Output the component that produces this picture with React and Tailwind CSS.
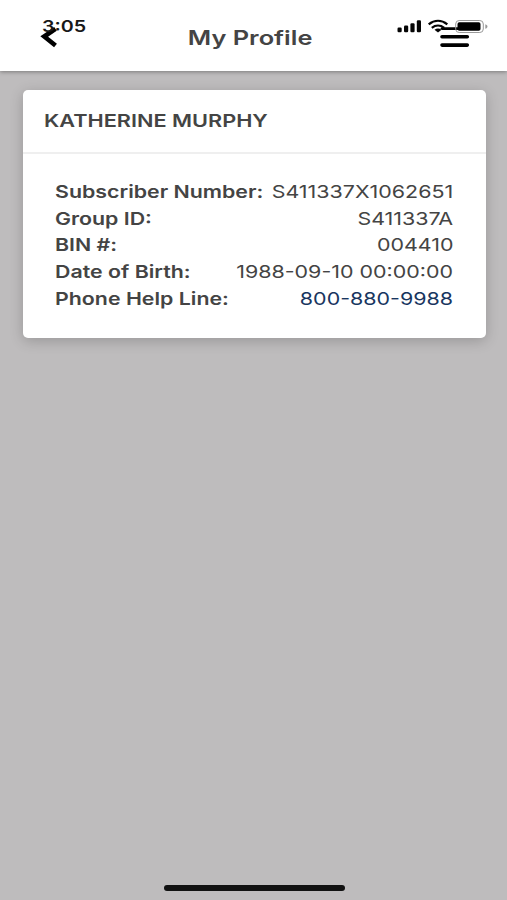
const details = [
  { label: 'Subscriber Number:', value: 'S411337X1062651' },
  { label: 'Group ID:', value: 'S411337A' },
  { label: 'BIN #:', value: '004410' },
  { label: 'Date of Birth:', value: '1988-09-10 00:00:00' },
  { label: 'Phone Help Line:', value: '800-880-9988', link: true },
]

function StatusIcons() {
  return (
    <svg width="92" height="16" viewBox="396 18 92 16" fill="none">
      <g fill="#050505">
        <rect x="397.5" y="27.5" width="4.2" height="4.8" rx="1.2" />
        <rect x="404" y="25.6" width="4.2" height="6.7" rx="1.2" />
        <rect x="410.4" y="23.2" width="4.2" height="9.1" rx="1.2" />
        <rect x="416.8" y="20.3" width="4.2" height="12" rx="1.2" />
      </g>
      <path d="M428.700 24.300C434.500 19.800 441.500 19.800 447.300 24.300" stroke="#050505" strokeWidth="2.300" />
      <path d="M431.800 27.800C435.500 24.900 440.500 24.900 444.200 27.800" stroke="#050505" strokeWidth="2.200" />
      <path d="M434.500 29.700Q438 27.300 441.500 29.700L438 32.500Z" fill="#050505" />
      <rect x="455.700" y="20.500" width="27.600" height="12" rx="3.500" stroke="#999" />
      <rect x="457.500" y="22.200" width="23" height="8.600" rx="1.800" fill="#000" />
      <path d="M485.300 24.200C488.200 25 488.200 28 485.300 28.800Z" fill="#999" />
    </svg>
  )
}

// Floats over the header, as the phone's own status bar does
function StatusBar() {
  return (
    <div className="pointer-events-none absolute inset-x-0 top-0 flex items-start justify-between pl-[42px] pr-[19px] pt-4">
      <span className="origin-left scale-x-[1.23] text-base font-semibold leading-[21px] text-[#181818]">3:05</span>
      <div className="pt-[2px]">
        <StatusIcons />
      </div>
    </div>
  )
}

function Header() {
  return (
    <header className="relative z-10 flex h-[71px] items-center justify-between bg-white pl-[38px] pr-[37px] pt-1 shadow-[0_1px_4px_rgba(0,0,0,0.35)]">
      <button aria-label="Back" className="w-8">
        <svg width="22" height="24" viewBox="0 0 22 24" fill="none">
          <path d="M17.500 2.800L6.200 10.500L17.500 19.500" stroke="#000" strokeWidth="4.600" />
        </svg>
      </button>
      <h1 className="mr-[9px] scale-x-[1.27] text-xl font-semibold leading-6 text-[#444]">My Profile</h1>
      <button aria-label="Menu">
        <svg width="30" height="22" viewBox="0 0 30 22" fill="none">
          <path d="M2 1.600H27.500" stroke="#000" strokeWidth="2.800" strokeLinecap="round" />
          <path d="M2 9.700H27.300M2 18.100H27.300" stroke="#000" strokeWidth="3.600" strokeLinecap="round" />
        </svg>
      </button>
      <StatusBar />
    </header>
  )
}

function DetailRow({ label, value, link }) {
  return (
    <div className="flex h-[26.600px] items-center justify-between whitespace-nowrap">
      <span className="origin-left scale-x-[1.22] font-semibold">{label}</span>
      {link ? (
        <a href="tel:800-880-9988" className="origin-right scale-x-[1.225] text-[#18365f]">{value}</a>
      ) : (
        <span className="origin-right scale-x-[1.225]">{value}</span>
      )}
    </div>
  )
}

export default function App() {
  return (
    <div className="flex h-[900px] w-[507px] flex-col overflow-hidden bg-[#bebcbd] font-['Inter',sans-serif] text-[#444]">
      <Header />
      <main className="flex-1 pl-[22.600px] pr-[21.400px] pt-[19px]">
        <section className="h-[247.500px] rounded-[5px] bg-white shadow-[0_3px_14px_rgba(0,0,0,0.2)]">
          <div className="flex h-[64px] items-center border-b-2 border-[#efefef] pl-[21.500px]">
            <h2 className="origin-left scale-x-[1.24] text-[17.500px] font-semibold leading-6">KATHERINE MURPHY</h2>
          </div>
          <div className="px-[32.500px] pt-[25px] text-[17.500px] leading-6">
            {details.map((row) => (
              <DetailRow key={row.label} {...row} />
            ))}
          </div>
        </section>
      </main>
      <footer className="flex justify-center pb-[9px] pl-[2px]">
        <div className="h-[6px] w-[181px] rounded-full bg-[#111]" />
      </footer>
    </div>
  )
}
